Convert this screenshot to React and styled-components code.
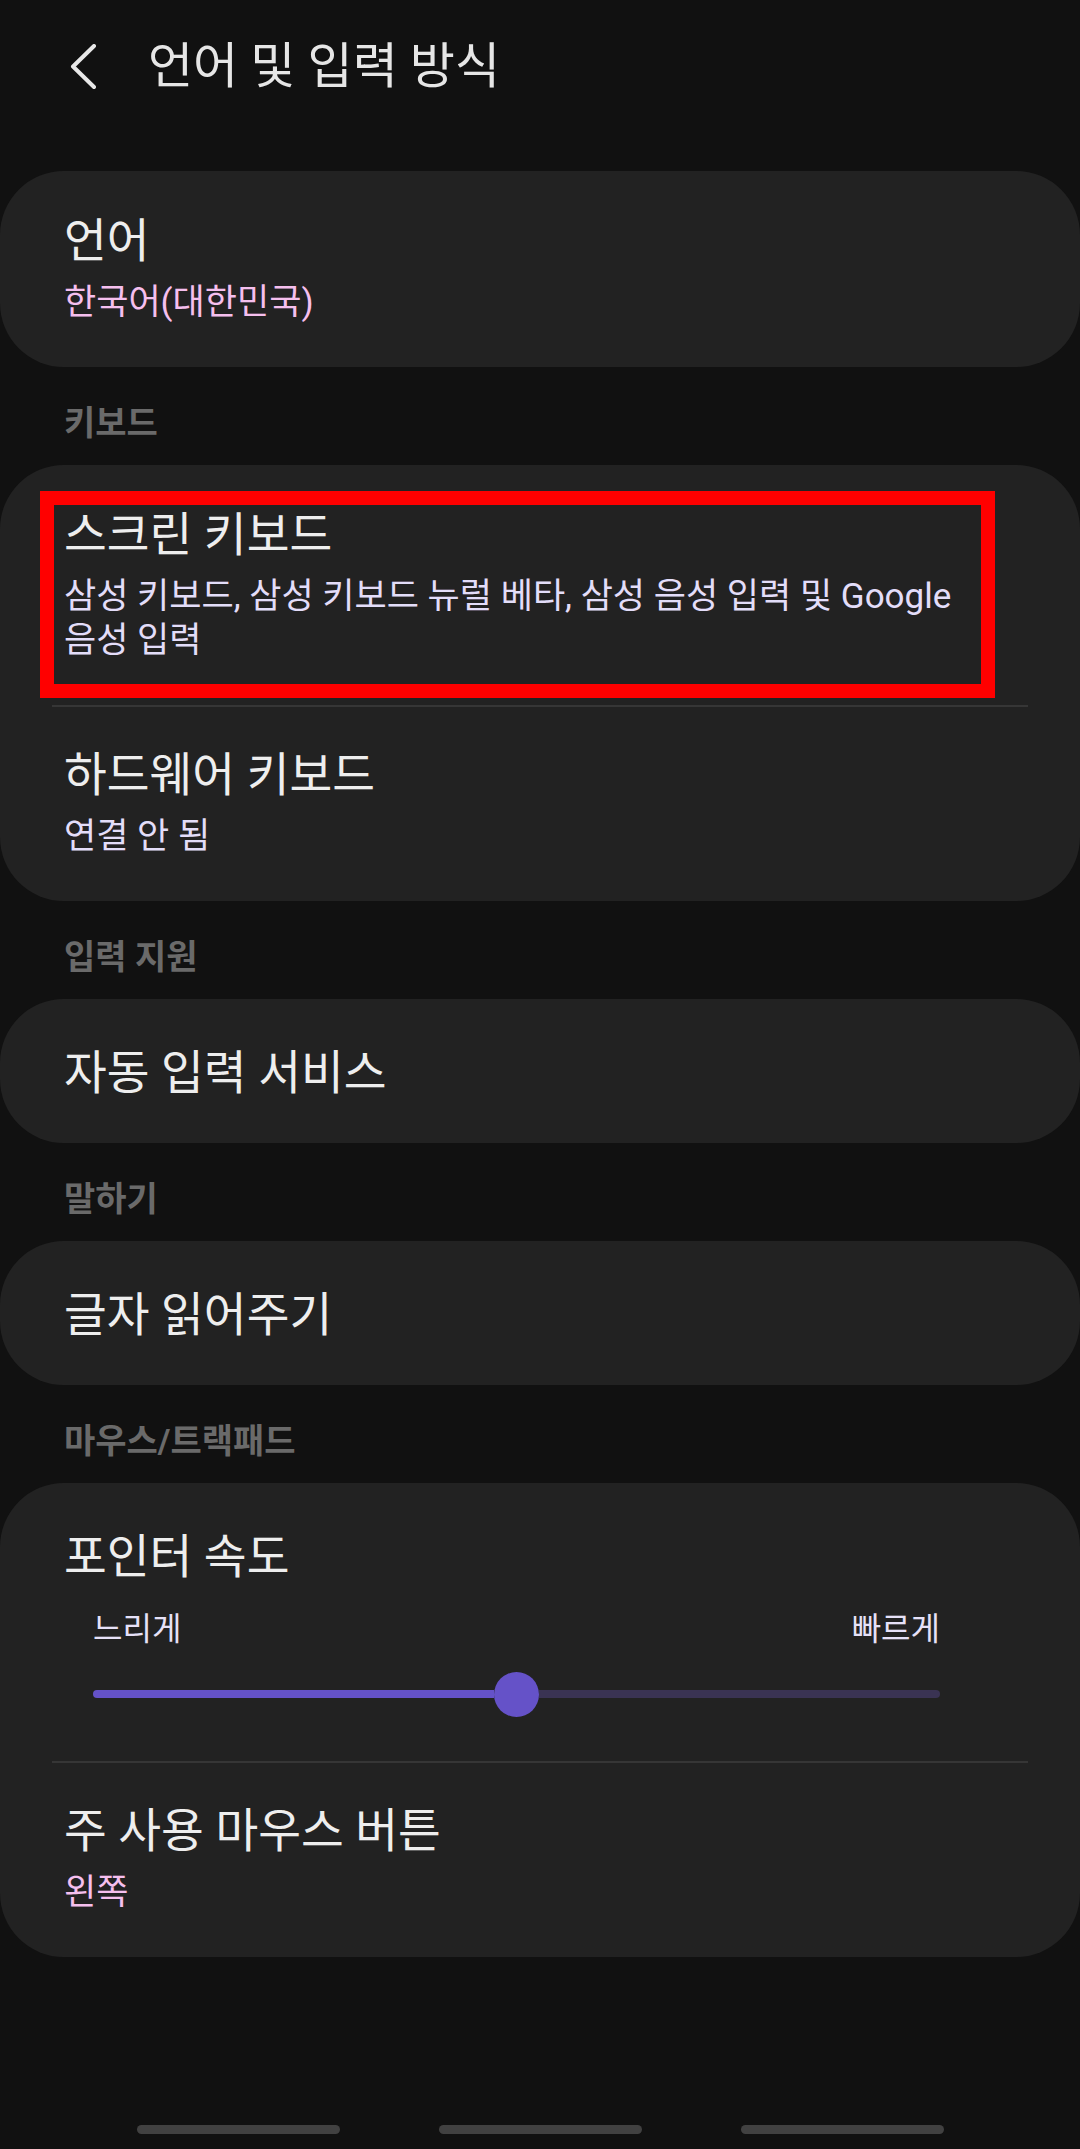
import styled, { createGlobalStyle } from "styled-components";

const GlobalStyle = createGlobalStyle`
    html, body {
        margin: 0;
        padding: 0;
        background-color: #111111;
    }
    body {
        font-family: Roboto, "Noto Sans CJK KR", "Noto Sans", sans-serif;
        -webkit-font-smoothing: antialiased;
        word-break: keep-all;
    }
`

const Page = styled.div`
    display: flex;
    flex-direction: column;
    min-height: 100vh;
    background-color: #111111;
    color: #eeeeee;
`

const Header = styled.header`
    display: flex;
    align-items: center;
    gap: 50px;
    height: 134px;
    padding-left: 70px;
    margin-bottom: 37px;
`

const BackButton = styled.button`
    display: flex;
    align-items: center;
    justify-content: center;
    padding: 0;
    border: none;
    background: none;
    color: #e8e8e8;
    cursor: pointer;
`

const PageTitle = styled.h1`
    margin: 0;
    font-size: 49px;
    font-weight: 400;
    line-height: 60px;
    color: #e6e6e6;
`

const Card = styled.section`
    display: flex;
    flex-direction: column;
    background-color: #222222;
    border-radius: 64px;
    overflow: hidden;
`

const SectionLabel = styled.h2`
    margin: 0;
    padding: 37px 64px 23px;
    font-size: 34px;
    font-weight: 700;
    line-height: 38px;
    color: #6a6a6a;
`

const Row = styled.div`
    position: relative;
    display: flex;
    flex-direction: column;
    padding: ${({ $single }) => ($single ? "46px 105px 42px 64px" : "42px 105px 42px 64px")};
`

const Divider = styled.hr`
    height: 2px;
    margin: 0 52px;
    border: none;
    background-color: #363636;

    & + ${Row} {
        padding-top: 40px;
    }
`

const Title = styled.div`
    font-size: 46.5px;
    line-height: 56px;
    color: #eeeeee;
`

const Summary = styled.div`
    margin-top: 12px;
    font-size: 35px;
    line-height: 44px;
    color: ${({ $tone }) => ($tone === "pink" ? "#f5bfee" : "#e3ddf9")};
    word-break: keep-all;
`

const Highlight = styled.div`
    position: absolute;
    top: 26px;
    left: 40px;
    right: 85px;
    bottom: 7px;
    border: 14px solid #ff0000;
    pointer-events: none;
`

const SliderRow = styled.div`
    display: flex;
    flex-direction: column;
    padding: 46px 64px 44px;
`

const SpeedLabels = styled.div`
    display: flex;
    justify-content: space-between;
    margin: 26px 76px 0 29px;
    font-size: 32px;
    line-height: 36px;
    color: #e6e1f8;
`

const Slider = styled.div`
    display: flex;
    align-items: center;
    height: 46px;
    margin: 24px 76px 0 29px;
`

const Track = styled.div`
    height: 8px;
    background-color: ${({ $active }) => ($active ? "#6552c8" : "#3a3353")};
    border-radius: ${({ $active }) => ($active ? "4px 0 0 4px" : "0 4px 4px 0")};
`

const Thumb = styled.div`
    flex-shrink: 0;
    width: 45px;
    height: 45px;
    border-radius: 50%;
    background-color: #6552c8;
`

const NavBar = styled.nav`
    display: flex;
    justify-content: center;
    gap: 99px;
    margin-top: auto;
    padding-bottom: 15px;
`

const NavPill = styled.span`
    display: block;
    width: 203px;
    height: 9px;
    border-radius: 5px;
    background-color: #414141;
`

const BackIcon = () => (
    <svg width="28" height="46" viewBox="0 0 28 46" fill="none">
        <polyline points="24,2 3,22.5 24,43" stroke="currentColor" strokeWidth="4" strokeLinecap="round" strokeLinejoin="round" />
    </svg>
)

const SpeedSlider = ({ value }) => (
    <Slider>
        <Track $active style={{ flexGrow: value }} />
        <Thumb />
        <Track style={{ flexGrow: 1 - value }} />
    </Slider>
)

export default function App() {
    return (
        <Page>
            <GlobalStyle />
            <Header>
                <BackButton aria-label="뒤로">
                    <BackIcon />
                </BackButton>
                <PageTitle>언어 및 입력 방식</PageTitle>
            </Header>

            <Card>
                <Row>
                    <Title>언어</Title>
                    <Summary $tone="pink">한국어(대한민국)</Summary>
                </Row>
            </Card>

            <SectionLabel>키보드</SectionLabel>
            <Card>
                <Row>
                    <Title>스크린 키보드</Title>
                    <Summary>삼성 키보드, 삼성 키보드 뉴럴 베타, 삼성 음성 입력 및 Google 음성 입력</Summary>
                    <Highlight />
                </Row>
                <Divider />
                <Row>
                    <Title>하드웨어 키보드</Title>
                    <Summary>연결 안 됨</Summary>
                </Row>
            </Card>

            <SectionLabel>입력 지원</SectionLabel>
            <Card>
                <Row $single>
                    <Title>자동 입력 서비스</Title>
                </Row>
            </Card>

            <SectionLabel>말하기</SectionLabel>
            <Card>
                <Row $single>
                    <Title>글자 읽어주기</Title>
                </Row>
            </Card>

            <SectionLabel>마우스/트랙패드</SectionLabel>
            <Card>
                <SliderRow>
                    <Title>포인터 속도</Title>
                    <SpeedLabels>
                        <span>느리게</span>
                        <span>빠르게</span>
                    </SpeedLabels>
                    <SpeedSlider value={0.5} />
                </SliderRow>
                <Divider />
                <Row>
                    <Title>주 사용 마우스 버튼</Title>
                    <Summary $tone="pink">왼쪽</Summary>
                </Row>
            </Card>

            <NavBar>
                <NavPill />
                <NavPill />
                <NavPill />
            </NavBar>
        </Page>
    )
}
